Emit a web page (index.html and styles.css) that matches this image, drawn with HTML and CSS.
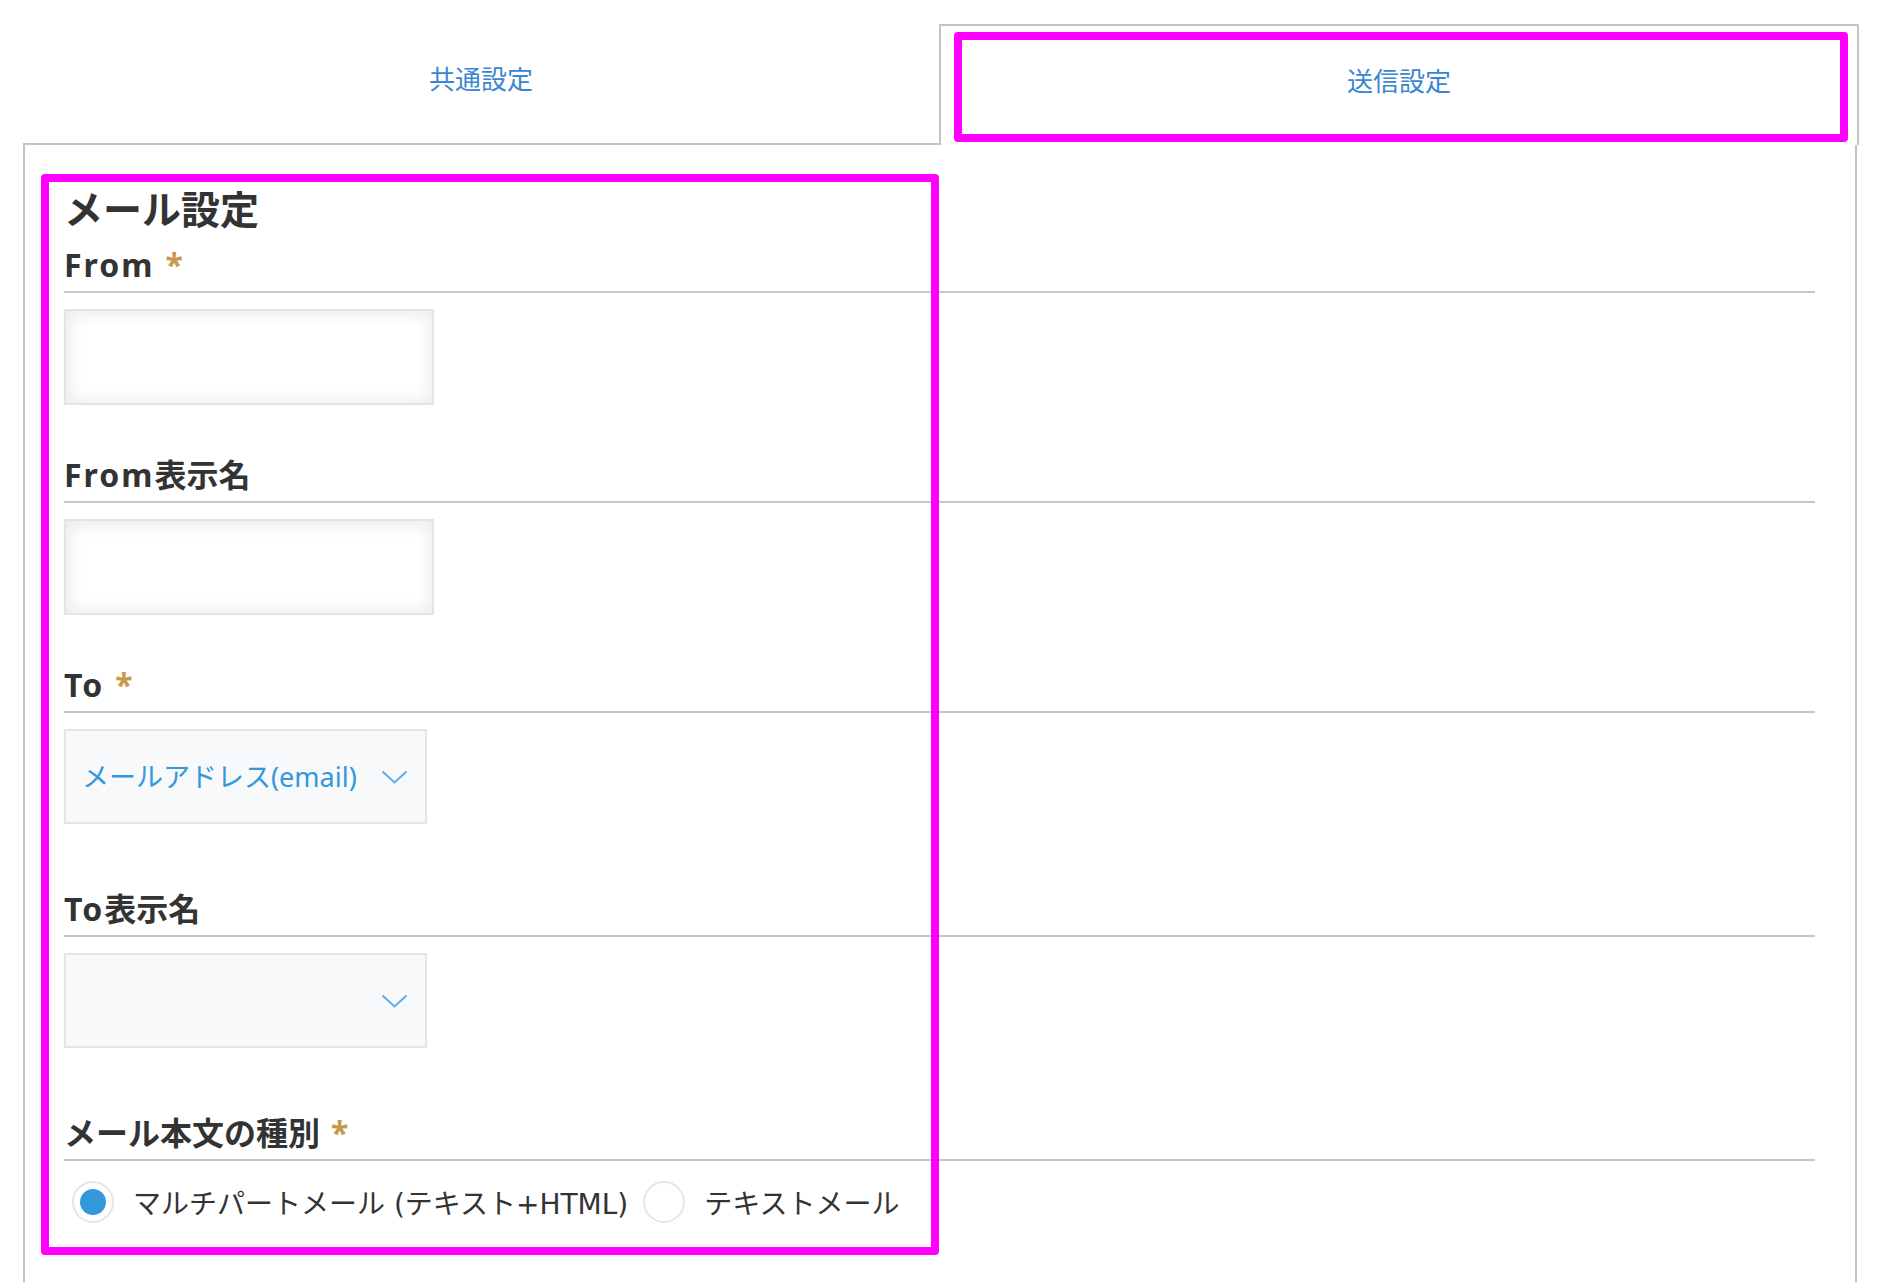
FILE: index.html
```html
<!DOCTYPE html>
<html lang="ja">
<head>
<meta charset="utf-8">
<title>送信設定</title>
<link rel="stylesheet" href="styles.css">
</head>
<body>
<div class="page">
  <div class="tabs">
    <div class="tab">共通設定</div>
    <div class="tab tab-active">送信設定</div>
  </div>
  <div class="panel">
    <h2 class="section-title">メール設定</h2>

    <div class="field field-first">
      <div class="field-label"><span class="latin">From</span><span class="req">*</span></div>
      <div class="text-input"></div>
    </div>

    <div class="field">
      <div class="field-label"><span class="latin">From</span>表示名</div>
      <div class="text-input"></div>
    </div>

    <div class="field">
      <div class="field-label"><span class="latin">To</span><span class="req">*</span></div>
      <div class="select-box">
        <span class="select-value">メールアドレス(email)</span>
        <svg class="chevron" width="27" height="14" viewBox="0 0 27 14"><polyline points="1.5,1.5 13.5,12.5 25.5,1.5" fill="none" stroke="#5aaee8" stroke-width="2"/></svg>
      </div>
    </div>

    <div class="field field-after-select">
      <div class="field-label"><span class="latin">To</span>表示名</div>
      <div class="select-box">
        <span class="select-value"></span>
        <svg class="chevron" width="27" height="14" viewBox="0 0 27 14"><polyline points="1.5,1.5 13.5,12.5 25.5,1.5" fill="none" stroke="#5aaee8" stroke-width="2"/></svg>
      </div>
    </div>

    <div class="field field-after-select">
      <div class="field-label">メール本文の種別<span class="req">*</span></div>
      <div class="radio-group">
        <label class="radio"><span class="radio-circle checked"></span><span class="radio-text">マルチパートメール (テキスト+HTML)</span></label>
        <label class="radio"><span class="radio-circle"></span><span class="radio-text">テキストメール</span></label>
      </div>
    </div>
  </div>

  <div class="highlight highlight-tab"></div>
  <div class="highlight highlight-form"></div>
</div>
</body>
</html>
```

FILE: styles.css
```css
html, body {
  margin: 0;
  padding: 0;
  background: #ffffff;
  height: 1282px;
  overflow: hidden;
}

body {
  font-family: "Noto Sans", "Noto Sans CJK JP", sans-serif;
  color: #333333;
}

.page {
  position: relative;
  width: 1836px;
  margin-left: 23px;
  padding-top: 24px;
}

.tabs {
  display: flex;
}

.tab {
  box-sizing: border-box;
  width: 916px;
  height: 121px;
  border-bottom: 2px solid #c4c4c4;
  display: flex;
  align-items: center;
  justify-content: center;
  padding-bottom: 12px;
  font-family: "Noto Sans CJK JP", sans-serif;
  font-size: 26px;
  color: #3b86d0;
}

.tab-active {
  flex: 1;
  width: auto;
  border: 2px solid #c4c4c4;
  border-bottom: none;
}

.panel {
  box-sizing: border-box;
  height: 1140px;
  margin-right: 2px;
  border-left: 2px solid #c4c4c4;
  border-right: 2px solid #c4c4c4;
  padding: 41px 40px 0 39px;
}

.section-title {
  margin: 0;
  font-size: 39px;
  line-height: 46px;
  font-weight: 700;
  color: #333333;
}

.field {
  margin-top: 50px;
}

.field-first {
  margin-top: 13px;
}

.field-after-select {
  margin-top: 65px;
}

.field-label {
  font-size: 32px;
  line-height: 40px;
  font-weight: 700;
  padding-bottom: 6px;
  border-bottom: 2px solid #c6c6c6;
  color: #333333;
}

.latin {
  letter-spacing: 2px;
}

.req {
  color: #c8994d;
  margin-left: 11px;
}

.text-input {
  box-sizing: border-box;
  margin-top: 16px;
  width: 370px;
  height: 96px;
  border: 2px solid #e2e5e5;
  background: #ffffff;
  box-shadow: inset 1px 1px 16px 3px #ebebeb;
}

.select-box {
  box-sizing: border-box;
  margin-top: 16px;
  width: 363px;
  height: 95px;
  border: 2px solid #e3e5e7;
  background: #f7f9fa;
  display: flex;
  align-items: center;
  justify-content: space-between;
  padding: 0 17px 0 16px;
}

.select-value {
  font-size: 27px;
  color: #3498db;
  padding-bottom: 2px;
}

.chevron {
  display: block;
  flex: none;
}

.radio-group {
  display: flex;
  align-items: center;
  margin-top: 20px;
  padding-left: 8px;
}

.radio {
  display: flex;
  align-items: center;
}

.radio + .radio {
  margin-left: 15px;
}

.radio-circle {
  box-sizing: border-box;
  width: 42px;
  height: 42px;
  border-radius: 50%;
  border: 2px solid #e4e6e7;
  background: #ffffff;
  display: flex;
  align-items: center;
  justify-content: center;
  flex: none;
}

.radio-circle.checked::after {
  content: "";
  width: 26px;
  height: 26px;
  border-radius: 50%;
  background: #3498db;
}

.radio-text {
  margin-left: 19px;
  font-family: "DejaVu Sans", "Noto Sans CJK JP", sans-serif;
  font-size: 28px;
  color: #333333;
}

.highlight {
  position: absolute;
  box-sizing: border-box;
  border: 8px solid #ff00ff;
  border-radius: 4px;
}

.highlight-tab {
  left: 931px;
  top: 32px;
  width: 894px;
  height: 110px;
}

.highlight-form {
  left: 18px;
  top: 174px;
  width: 898px;
  height: 1081px;
}
```
